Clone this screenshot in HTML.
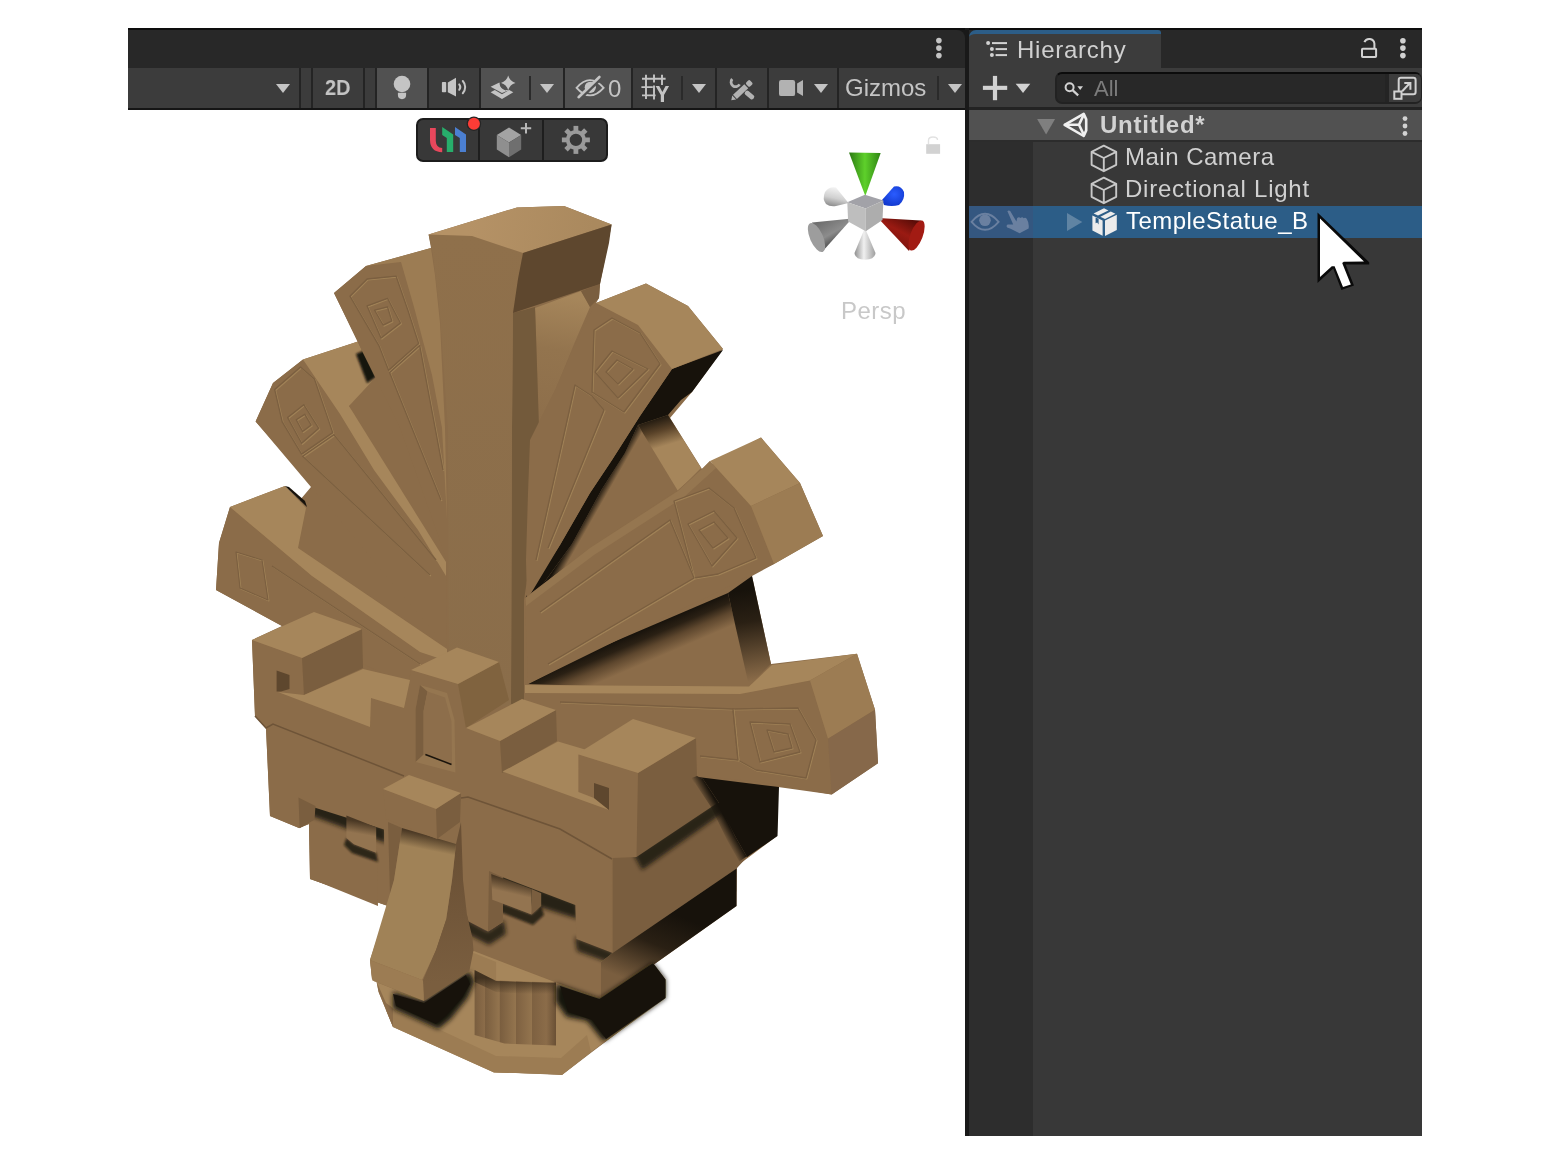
<!DOCTYPE html>
<html>
<head>
<meta charset="utf-8">
<title>Unity - Scene / Hierarchy</title>
<style>
html,body{margin:0;padding:0;}
body{width:1550px;height:1164px;background:#fff;position:relative;overflow:hidden;font-family:"Liberation Sans",sans-serif;color:#c4c4c4;}
.abs{position:absolute;}
.t{position:absolute;white-space:nowrap;line-height:1;font-size:24px;transform-origin:0 0;will-change:transform;}
/* scene view */
#sv-tabbar{left:128px;top:30px;width:837px;height:38px;background:#282828;box-sizing:border-box;border-top-right-radius:8px;}
#sv-toolbar{left:128px;top:68px;width:837px;height:40px;background:#3c3c3c;}
#sv-tbline{left:128px;top:108px;width:837px;height:2px;background:#151515;}
.sep{position:absolute;top:68px;width:2px;height:40px;background:#242424;}
.on{position:absolute;top:68px;height:40px;background:#515151;}
.idiv{position:absolute;top:76px;width:2px;height:24px;background:#2a2a2a;}
.dd{position:absolute;width:0;height:0;border-left:7px solid transparent;border-right:7px solid transparent;border-top:9px solid #c4c4c4;}
/* hierarchy */
#divider{left:965px;top:28px;width:4px;height:1108px;background:#191919;}
#h-tabbar{left:969px;top:28px;width:453px;height:40px;background:#282828;border-top:2px solid #0d0d0d;box-sizing:border-box;}
#h-tab{left:969px;top:30px;width:192px;height:38px;background:#3c3c3c;border-top:4px solid #2c5d87;box-sizing:border-box;border-top-left-radius:7px;border-top-right-radius:3px;}
#h-toolbar{left:969px;top:68px;width:453px;height:40px;background:#3c3c3c;}
#h-tbline{left:969px;top:107px;width:453px;height:3px;background:#232323;}
#h-body{left:969px;top:110px;width:453px;height:1026px;background:#383838;}
#h-leftcol{left:969px;top:141px;width:64px;height:995px;background:#2d2d2d;}
#h-scene{left:969px;top:110px;width:453px;height:29.5px;background:#515151;border-bottom:2px solid #2c2c2c;}
#h-sel{left:1033px;top:206px;width:389px;height:32px;background:#2c5d87;}
#h-sel-l{left:969px;top:206px;width:64px;height:32px;background:#345780;}
#search{left:1055px;top:72px;width:367px;height:32px;box-sizing:border-box;background:#282828;border:2px solid #222222;border-top-color:#0c0c0c;border-radius:7px;}
#searchbtn{left:1385px;top:74px;width:36px;height:28px;box-sizing:border-box;background:#3c3c3c;border-left:4px solid #242424;border-radius:0 5px 5px 0;}
</style>
</head>
<body>

<!-- ================= SCENE VIEW CHROME ================= -->
<div class="abs" style="left:128px;top:28px;width:1294px;height:2px;background:#0d0d0d;"></div>
<div class="abs" style="left:950px;top:30px;width:19px;height:38px;background:#191919;"></div>
<div class="abs" id="sv-tabbar"></div>
<div class="abs" id="sv-toolbar"></div>
<div class="abs" id="sv-tbline"></div>

<div class="on" style="left:377px;width:50px;"></div>
<div class="on" style="left:481px;width:82px;"></div>
<div class="on" style="left:565px;width:66px;"></div>

<div class="sep" style="left:299px"></div>
<div class="sep" style="left:311px"></div>
<div class="sep" style="left:363px"></div>
<div class="sep" style="left:375px"></div>
<div class="sep" style="left:427px"></div>
<div class="sep" style="left:479px"></div>
<div class="sep" style="left:563px"></div>
<div class="sep" style="left:631px"></div>
<div class="sep" style="left:715px"></div>
<div class="sep" style="left:767px"></div>
<div class="sep" style="left:837px"></div>

<div class="idiv" style="left:529px"></div>
<div class="idiv" style="left:681px"></div>
<div class="idiv" style="left:937px"></div>

<div class="dd" style="left:276px;top:84px"></div>
<div class="dd" style="left:540px;top:84px"></div>
<div class="dd" style="left:692px;top:84px"></div>
<div class="dd" style="left:814px;top:84px"></div>
<div class="dd" style="left:948px;top:84px"></div>

<div class="t" id="t2d" style="left:325px;top:77.3px;font-weight:bold;font-size:22.5px;transform:scaleX(0.885);">2D</div>
<div class="t" id="tzero" style="left:608px;top:77px;">0</div>
<div class="t" id="tgizmos" style="left:845px;top:76px;">Gizmos</div>

<!-- ICONS-SCENE-TOOLBAR -->
<svg class="abs" style="left:128px;top:28px" width="837" height="82" viewBox="128 28 837 82">
<g fill="#c4c4c4">
<!-- scene tab menu dots -->
<circle cx="938.9" cy="40.6" r="2.8"/><circle cx="938.9" cy="48.1" r="2.8"/><circle cx="938.9" cy="55.6" r="2.8"/>
<!-- bulb -->
<circle cx="402" cy="84" r="8.3"/>
<path d="M397.9,92.8 H406.1 V95.1 A4.1,4.1 0 0 1 397.9,95.1 Z"/>
<!-- audio -->
<rect x="441.9" y="82" width="4.3" height="10.3" rx="0.8"/>
<polygon points="447.8,82.4 456,77.8 456,96.4 447.8,92.3"/>
<!-- fx layers -->
<path d="M490.6,92.3 L502,98.9 L513.3,92.3 L509.2,90 L502,94.2 L494.8,90 Z"/>
<path d="M490.6,86.8 L499.4,82.6 Q500.4,91 509.3,90 L502,93 Z"/>
<path d="M508.2,75.6 Q509.8,81.4 515.5,83 Q509.8,84.6 508.2,90.3 Q506.6,84.6 500.9,83 Q506.6,81.4 508.2,75.6 Z"/>
<path d="M499.6,84.6 l2.2,-1 q1.2,4.6 5.6,5.6 l-1.6,1.2 q-4.6,-1.2 -6.2,-5.8z" fill="#515151"/>
</g>
<g fill="none" stroke="#c4c4c4" stroke-width="2" stroke-linecap="round">
<path d="M459.2,84.4 A4.2,4.2 0 0 1 459.2,89.8"/>
<path d="M462.8,81 A9,9 0 0 1 462.8,93.2"/>
</g>
<!-- eye slash -->
<g fill="none" stroke="#c4c4c4" stroke-width="1.9">
<path d="M576.6,87.8 Q590,72.5 603.6,87.8 Q590,103 576.6,87.8 Z"/>
</g>
<circle cx="590.3" cy="87.3" r="5.6" fill="#c4c4c4"/>
<path d="M579.6,99.2 L600.8,78.6" stroke="#515151" stroke-width="3" fill="none"/>
<path d="M578.6,97.2 L599.4,77" stroke="#c4c4c4" stroke-width="2.6" stroke-linecap="round" fill="none"/>
<!-- grid -->
<g stroke="#c4c4c4" stroke-width="1.9" fill="none">
<path d="M646,74.8 V99 M654,74.4 V82.4 M654,85.6 V99.4 M662,74.8 V85"/>
<path d="M642,78.8 H665.6 M641.4,87.1 H652.8 M642,95.4 H655.6"/>
</g>
<path d="M655.6,86 h3.6 l3.2,6 l3.2,-6 h3.5 l-5.1,9 v7 h-3.2 v-7 z" fill="#c4c4c4"/>
<!-- tools -->
<g fill="#b2b2b2">
<g transform="rotate(-43 742.8 89.4)">
<rect x="732" y="86.6" width="15.5" height="5.7"/>
<path d="M731,86.6 L727,89.45 L731,92.3 Z"/>
<rect x="748.8" y="86.6" width="5.5" height="5.7" rx="1.6"/>
</g>
<g transform="rotate(40 749 94.5)"><rect x="744.4" y="92.2" width="10.6" height="4.8" rx="2"/></g>
</g>
<path d="M732.2,79 A4.6,4.6 0 1 0 739.6,84.4" fill="none" stroke="#b2b2b2" stroke-width="2.8"/>
<!-- camera -->
<rect x="779" y="80.1" width="16.1" height="16" rx="2.2" fill="#b2b2b2"/>
<polygon points="797.1,83.6 803,80.1 803,96.1 797.1,92.6" fill="#b2b2b2"/>
</svg>

<!-- /ICONS-SCENE-TOOLBAR -->

<!-- ================= HIERARCHY ================= -->
<div class="abs" id="divider"></div>
<div class="abs" id="h-tabbar"></div>
<div class="abs" id="h-tab"></div>
<div class="abs" id="h-toolbar"></div>
<div class="abs" id="h-body"></div>
<div class="abs" id="h-leftcol"></div>
<div class="abs" id="h-scene"></div>
<div class="abs" id="h-tbline"></div>
<div class="abs" id="h-sel"></div>
<div class="abs" id="h-sel-l"></div>
<div class="abs" id="search"></div>
<div class="abs" id="searchbtn"></div>

<div class="t" id="thier" style="left:1016.5px;top:38px;letter-spacing:0.75px;color:#d0d0d0;">Hierarchy</div>
<div class="t" id="tall" style="left:1094px;top:77.8px;font-size:22px;color:#7c7c7c;">All</div>
<div class="t" id="tuntitled" style="left:1100px;top:113.3px;font-weight:bold;letter-spacing:0.75px;color:#d2d2d2;">Untitled*</div>
<div class="t" id="tmain" style="left:1124.8px;top:145px;letter-spacing:0.5px;color:#d0d0d0;">Main Camera</div>
<div class="t" id="tdir" style="left:1124.5px;top:177px;letter-spacing:0.75px;color:#d0d0d0;">Directional Light</div>
<div class="t" id="ttemple" style="left:1126.4px;top:209px;letter-spacing:0.45px;color:#ffffff;">TempleStatue_B</div>

<!-- ICONS-HIERARCHY -->
<svg class="abs" style="left:965px;top:28px" width="460" height="215" viewBox="965 28 460 215">
<g fill="#d2d2d2">
<!-- tab icon -->
<circle cx="988.1" cy="43.1" r="2"/><circle cx="991.9" cy="49.1" r="2"/><circle cx="991.9" cy="55.1" r="2"/>
<rect x="992" y="42.1" width="15" height="2"/><rect x="995.6" y="48.1" width="11.4" height="2"/><rect x="995.6" y="54.1" width="11.4" height="2"/>
<!-- plus -->
<rect x="982.9" y="85.8" width="24.3" height="4.1"/><rect x="992.9" y="75.9" width="4.2" height="24.3"/>
<!-- dropdown -->
<polygon points="1015.7,83.7 1030.3,83.7 1023,93"/>
<!-- search dropdown -->
<polygon points="1077.4,86.3 1083,86.3 1080.2,89.9"/>
<!-- menu dots -->
<circle cx="1402.9" cy="40.7" r="2.8"/><circle cx="1402.9" cy="48.1" r="2.8"/><circle cx="1402.9" cy="55.6" r="2.8"/>
<circle cx="1405" cy="118.6" r="2.4"/><circle cx="1405" cy="126" r="2.4"/><circle cx="1405" cy="133.5" r="2.4"/>
</g>
<!-- magnifier -->
<circle cx="1069.6" cy="87.3" r="4" fill="none" stroke="#d2d2d2" stroke-width="2"/>
<path d="M1072.8,90.4 L1078.2,95.4" stroke="#d2d2d2" stroke-width="2.2"/>
<!-- lock -->
<rect x="1362" y="48.7" width="14.1" height="8.3" rx="0.8" fill="none" stroke="#d2d2d2" stroke-width="2"/>
<path d="M1364.4,42.2 A5.2,5.2 0 0 1 1374.4,43.6 V48" fill="none" stroke="#d2d2d2" stroke-width="2"/>
<!-- popout icon -->
<g fill="none" stroke="#d2d2d2" stroke-width="2">
<rect x="1398.7" y="77.7" width="16.9" height="16.6" rx="2.2"/>
<rect x="1394.3" y="91.5" width="7.2" height="7.3" fill="#3c3c3c"/>
<path d="M1402.2,91.2 L1410.2,82.8 M1404.3,82.9 H1410.4 V89.8"/>
</g>
<!-- scene row: foldout + unity logo -->
<polygon points="1037.1,119 1055.1,119 1046.1,134.5" fill="#7f7f7f"/>
<g fill="none" stroke="#f0f0f0" stroke-width="2.6" stroke-linejoin="round">
<path d="M1064.6,124.8 L1083.7,113.8 L1086.2,119.4 L1086.2,130.4 L1083.7,136 Z"/>
<path d="M1064.6,124.8 H1079 M1079,124.8 L1083.9,114.4 M1079,124.8 L1084.1,135.4"/>
</g>
<!-- cube icons -->
<g fill="none" stroke="#c8c8c8" stroke-width="1.9" stroke-linejoin="round">
<path id="cubeo" d="M1103.8,145.6 L1116.2,151.8 V164.8 L1103.8,171.2 L1091.6,164.8 V151.8 Z M1091.6,151.8 L1103.8,158 L1116.2,151.8 M1103.8,158 V171.2"/>
<use href="#cubeo" transform="translate(0 32)"/>
</g>
<!-- eye + hand in selected row -->
<path d="M971.6,221.8 Q985,205.8 998.6,221.8 Q985,237.8 971.6,221.8 Z" fill="none" stroke="#6a80a0" stroke-width="1.9"/>
<circle cx="985" cy="220.3" r="5.8" fill="#6a80a0"/>
<path d="M1007.4,211.2 Q1008.6,209.8 1010.2,211 L1016.4,221.4 L1017.2,218 Q1019,216.6 1020.4,218 Q1022.4,216.4 1023.6,218.2 Q1025.6,217 1026.8,219 Q1029.4,223 1028.6,228.4 L1019.6,233.2 L1010.6,228.8 L1007.2,227.4 Q1005.8,225.6 1007.6,224.4 L1013.2,224.6 Z" fill="#6a80a0"/>
<!-- expand triangle -->
<polygon points="1067,213.1 1082.3,222.1 1067,231.1" fill="#6084a3"/>
<!-- prefab icon -->
<g fill="#ececec">
<polygon points="1092.4,215.6 1102.6,220.6 1102.6,235.8 1092.4,230.4"/>
<polygon points="1105,220.6 1116.8,214.8 1116.8,230 1105,236"/>
<polygon points="1093.6,213.4 1104,208.2 1108.4,210.4 1098,215.6"/>
<polygon points="1100.4,216.8 1110.8,211.6 1115.4,213.8 1105,219"/>
</g>
<polygon points="1095.6,217.4 1098.6,218.8 1098.6,224.6 1097.2,222.6 1095.6,223.2" fill="#2c5d87"/>
</svg>

<!-- /ICONS-HIERARCHY -->

<!-- ================= SCENE CONTENT ================= -->
<!-- STATUE -->
<svg class="abs" style="left:0;top:0" width="1550" height="1164" viewBox="0 0 1550 1164" shape-rendering="geometricPrecision">
<defs>
<filter id="b1" x="-30%" y="-30%" width="160%" height="160%"><feGaussianBlur stdDeviation="1.2"/></filter>
<filter id="b3" x="-30%" y="-30%" width="160%" height="160%"><feGaussianBlur stdDeviation="2"/></filter>
<filter id="b2" x="-30%" y="-30%" width="160%" height="160%"><feGaussianBlur stdDeviation="2.5"/></filter>
<linearGradient id="gTopBox" gradientUnits="userSpaceOnUse" x1="470" y1="215" x2="590" y2="240"><stop offset="0" stop-color="#b59266"/><stop offset="1" stop-color="#aa895e"/></linearGradient>
<linearGradient id="gDiag" gradientUnits="userSpaceOnUse" x1="725" y1="818" x2="716.3" y2="822.9"><stop offset="0" stop-color="#17120b" stop-opacity="1"/><stop offset="1" stop-color="#17120b" stop-opacity="0"/></linearGradient>
<linearGradient id="gC" gradientUnits="userSpaceOnUse" x1="470" y1="235" x2="480" y2="700"><stop offset="0" stop-color="#8f704b"/><stop offset="1" stop-color="#8a6d4a"/></linearGradient>
<linearGradient id="gC5" gradientUnits="userSpaceOnUse" x1="560" y1="295" x2="535" y2="450"><stop offset="0" stop-color="#a6865b"/><stop offset="0.35" stop-color="#93744e"/><stop offset="1" stop-color="#8b6c49"/></linearGradient>
<linearGradient id="gR25" gradientUnits="userSpaceOnUse" x1="650" y1="626" x2="662.6" y2="655.4"><stop offset="0" stop-color="#17120b"/><stop offset="0.3" stop-color="#2a2014"/><stop offset="0.6" stop-color="#5e472e"/><stop offset="1" stop-color="#8b6c49"/></linearGradient>
<linearGradient id="gR25r" gradientUnits="userSpaceOnUse" x1="745" y1="590" x2="760" y2="680"><stop offset="0" stop-color="#17120b"/><stop offset="0.35" stop-color="#2a2014"/><stop offset="1" stop-color="#8b6c49"/></linearGradient>
<linearGradient id="gR15f" gradientUnits="userSpaceOnUse" x1="600" y1="490" x2="607" y2="494"><stop offset="0" stop-color="#17120b"/><stop offset="1" stop-color="#8b6c49"/></linearGradient>
<linearGradient id="gR15t" gradientUnits="userSpaceOnUse" x1="655" y1="416" x2="664" y2="446"><stop offset="0" stop-color="#17120b"/><stop offset="0.5" stop-color="#5a4329"/><stop offset="1" stop-color="#a6865b"/></linearGradient>
<linearGradient id="gBandR" gradientUnits="userSpaceOnUse" x1="696" y1="788" x2="708" y2="780"><stop offset="0" stop-color="#7a5e3f"/><stop offset="1" stop-color="#3a2c1c"/></linearGradient>
<linearGradient id="gLowR" gradientUnits="userSpaceOnUse" x1="677" y1="830" x2="686" y2="844"><stop offset="0" stop-color="#3a2c1c"/><stop offset="1" stop-color="#7a5e3f"/></linearGradient>
<linearGradient id="gJawR" gradientUnits="userSpaceOnUse" x1="670" y1="912" x2="640" y2="985"><stop offset="0" stop-color="#17120b"/><stop offset="0.45" stop-color="#2a2014"/><stop offset="1" stop-color="#7a5e3f"/></linearGradient>
<linearGradient id="gRecL" gradientUnits="userSpaceOnUse" x1="340" y1="818" x2="336" y2="842"><stop offset="0" stop-color="#3a2c1c"/><stop offset="1" stop-color="#8b6c49"/></linearGradient>
<linearGradient id="gRecR" gradientUnits="userSpaceOnUse" x1="530" y1="888" x2="524" y2="912"><stop offset="0" stop-color="#3a2c1c"/><stop offset="1" stop-color="#8b6c49"/></linearGradient>
<linearGradient id="gEyeL" gradientUnits="userSpaceOnUse" x1="362" y1="822" x2="360" y2="834"><stop offset="0" stop-color="#4a3824"/><stop offset="1" stop-color="#937450"/></linearGradient>
<linearGradient id="gEyeR" gradientUnits="userSpaceOnUse" x1="512" y1="880" x2="509" y2="893"><stop offset="0" stop-color="#4a3824"/><stop offset="1" stop-color="#937450"/></linearGradient>
<linearGradient id="gNose" gradientUnits="userSpaceOnUse" x1="430" y1="835" x2="427" y2="850"><stop offset="0" stop-color="#4a3824"/><stop offset="1" stop-color="#a08257"/></linearGradient>
<linearGradient id="gNoseR" gradientUnits="userSpaceOnUse" x1="455" y1="850" x2="466" y2="980"><stop offset="0" stop-color="#6a5035"/><stop offset="1" stop-color="#7a5e3f"/></linearGradient>
<linearGradient id="gCol" gradientUnits="userSpaceOnUse" x1="475" y1="0" x2="556" y2="0">
<stop offset="0" stop-color="#7a5e3f"/><stop offset="0.12" stop-color="#8b6c49"/><stop offset="0.13" stop-color="#7a5e3f"/><stop offset="0.3" stop-color="#93744e"/><stop offset="0.31" stop-color="#7a5e3f"/><stop offset="0.5" stop-color="#93744e"/><stop offset="0.51" stop-color="#7e6141"/><stop offset="0.7" stop-color="#93744e"/><stop offset="0.71" stop-color="#7e6141"/><stop offset="0.88" stop-color="#8b6c49"/><stop offset="1" stop-color="#6a5035"/></linearGradient>
<linearGradient id="gColSh" gradientUnits="userSpaceOnUse" x1="0" y1="978" x2="0" y2="994"><stop offset="0" stop-color="#3a2c1c" stop-opacity="0.9"/><stop offset="1" stop-color="#3a2c1c" stop-opacity="0"/></linearGradient>
<linearGradient id="gBaseSh" gradientUnits="userSpaceOnUse" x1="560" y1="1000" x2="600" y2="1020"><stop offset="0" stop-color="#8b6c49" stop-opacity="0"/><stop offset="1" stop-color="#17120b"/></linearGradient>
</defs>
<polygon points="230,507 285,486 300,500 311,487 255.6,421.6 273,383 303,359.6 358,341.6 334,293 366,266 431,248 428.6,234.4 517,207.4 564,206 611.6,224.6 600,284 599,298 596,303 646,283.6 688,306 723,349 692,392 670,418 702,469 761,437.6 800,483 823,536 774,564 752,576 771,664 857,653.8 875,709.7 878,763.3 831.7,794.6 778,787 777,836 737,866 736.5,906 653.8,964.4 665,980 665,997 592,1052 562,1075 495,1072 393,1025 377,982 372,979 370,960 388,906 310,879 309,824 299,828 270,816 266,728 255,716 252,640 282,626 216,590 219,543" fill="#8b6c49" />
<polygon points="528,684 590,652 728,593 749,686 590,686" fill="url(#gR25)" />
<polygon points="728,593 752,576 771,664 749,686" fill="url(#gR25r)" />
<polygon points="638,425 678,491 590,548 525.5,598 543,584 572,544 602,489 625,453" fill="url(#gR15f)" />
<polygon points="638,425 668,415 701,468 678,491" fill="url(#gR15t)" />
<polygon points="535,308 581,291 590,307 574,344 556,388 530,440 528,560 525,600 539,428 536,335" fill="url(#gC5)" />
<polygon points="581,291 600,284 599,298 590,307" fill="#7a5e3f" />
<polygon points="311,487 298,548 447,649 447,645" fill="#8b6c49" />
<polygon points="230,507 219,543 216,590 282,626 440,700 449,700 447,660 420,652 312,576" fill="#8b6c49" />
<polygon points="230,507 285,486 306,508 298,548 447,649 447,661 420,652 312,576" fill="#a6865b" />
<polygon points="285,486 307,507 305,501 289,487" fill="#17120b" />
<polygon points="255.6,421.6 273,383 303,359.6 340,414 374,470 418,530 446,575 447,647 375,563 312,485" fill="#8b6c49" />
<polygon points="303,359.6 358,341.6 363,353 380,387 349,406 400,470 446,552 446,576 418,530 374,470 340,414" fill="#a6865b" />
<polygon points="356,354 365,350 376,377 367,383" fill="#17120b" filter="url(#b1)"/>
<polygon points="349,406 376,377 400,428 446,556 446,562" fill="#8b6c49" />
<polygon points="334,293 366,266 401,262 414,307 432,375 442,428 446,500 446,558 400,428 380,387 363,353" fill="#8b6c49" />
<polygon points="366,266 431,248 435,275 440,323 445,428 447,520 442,428 432,375 414,307 401,262" fill="#9c7c53" />
<polygon points="513,313 535,307 536,335 539,428 530,560 524,600 524,704 511,704 512,428" fill="#735a3b" />
<polygon points="428.6,234.4 472,236 523,253 518,279 513,313 512,428 511,706 449,706 448,428 440,315 433,255" fill="url(#gC)" />
<polygon points="428.6,234.4 517,207.4 564,206 611.6,224.6 523,253 472,236" fill="url(#gTopBox)" />
<polygon points="523,253 611.6,224.6 609,243 600,284 513,313 518,279" fill="#5e472e" />
<polygon points="672,369 723,350 692,392 681,400 668,415 638,425 625,453 602,489 572,544 543,584 525.5,597.5 560,545 590,493 612,460 640,416" fill="#17120b" />
<polygon points="596,303 638,325 672,369 640,416 612,460 590,493 560,545 527,600 526,560 528,493 530,440 556,388 576,342" fill="#8b6c49" />
<polygon points="596,303 646,283.6 688,306 723,349 672,369 638,325" fill="#a6865b" />
<polygon points="702,469 710,461 751,506 774,564 752,574 718,592 632,633 528,684 525,598 590,548 678,490" fill="#8b6c49" />
<polygon points="525.5,598 590,548 678,491 702,469 710,461 716,468 684,497 594,555 526,606" fill="#957650" />
<polygon points="710,461 761,437.6 800,483 751,506" fill="#a6865b" />
<polygon points="751,506 800,483 823,536 774,564" fill="#9c7c53" />
<polygon points="525,692 740,694 810,681 828,738.7 831.7,794.6 761,782 698.5,775.8 696,745 525,745" fill="#8b6c49" />
<polygon points="525,685 749,686.4 772,665 857,653.8 810,680.6 740,694 525,693" fill="#a6865b" />
<polygon points="810,680.6 857,653.8 875,709.7 828,738.7" fill="#9c7c53" />
<polygon points="828,738.7 875,709.7 878,763.3 831.7,794.6" fill="#86684a" />
<path d="M349.9,296.2 L367.1,279 L396.1,276.2 L407.9,310.2 L418.6,343.4 L388.6,370.3 L378.9,345.6 Z" fill="none" stroke="#a08257" stroke-width="1.3" transform="translate(0.9,0.9)" stroke-linejoin="round"/>
<path d="M349.9,296.2 L367.1,279 L396.1,276.2 L407.9,310.2 L418.6,343.4 L388.6,370.3 L378.9,345.6 Z" fill="none" stroke="#7b5f40" stroke-width="1.3" stroke-linejoin="round"/>
<path d="M367.1,305.9 L387.5,298.3 L400.4,323 L381,338.1 Z" fill="none" stroke="#a08257" stroke-width="1.3" transform="translate(0.9,0.9)" stroke-linejoin="round"/>
<path d="M367.1,305.9 L387.5,298.3 L400.4,323 L381,338.1 Z" fill="none" stroke="#7b5f40" stroke-width="1.3" stroke-linejoin="round"/>
<path d="M374.6,310.2 L387.5,306.9 L391.8,320.9 L383.2,325.2 Z" fill="none" stroke="#a08257" stroke-width="1.3" transform="translate(0.9,0.9)" stroke-linejoin="round"/>
<path d="M374.6,310.2 L387.5,306.9 L391.8,320.9 L383.2,325.2 Z" fill="none" stroke="#7b5f40" stroke-width="1.3" stroke-linejoin="round"/>
<path d="M441,500 L389.6,372.4 L419.7,345.6 L443,470" fill="none" stroke="#a08257" stroke-width="1.3" transform="translate(0.9,0.9)" stroke-linejoin="round"/>
<path d="M441,500 L389.6,372.4 L419.7,345.6 L443,470" fill="none" stroke="#7b5f40" stroke-width="1.3" stroke-linejoin="round"/>
<path d="M274.7,389.6 L300.5,367.1 L314.4,378.9 L332.7,432.6 L301.6,454.1 L282.2,421.9 Z" fill="none" stroke="#a08257" stroke-width="1.3" transform="translate(0.9,0.9)" stroke-linejoin="round"/>
<path d="M274.7,389.6 L300.5,367.1 L314.4,378.9 L332.7,432.6 L301.6,454.1 L282.2,421.9 Z" fill="none" stroke="#7b5f40" stroke-width="1.3" stroke-linejoin="round"/>
<path d="M287.6,417.6 L303.7,404.7 L318.7,428.3 L301.6,443.3 Z" fill="none" stroke="#a08257" stroke-width="1.3" transform="translate(0.9,0.9)" stroke-linejoin="round"/>
<path d="M287.6,417.6 L303.7,404.7 L318.7,428.3 L301.6,443.3 Z" fill="none" stroke="#7b5f40" stroke-width="1.3" stroke-linejoin="round"/>
<path d="M296.2,419.7 L304.8,414.3 L311.2,425.1 L302.6,431.5 Z" fill="none" stroke="#a08257" stroke-width="1.3" transform="translate(0.9,0.9)" stroke-linejoin="round"/>
<path d="M296.2,419.7 L304.8,414.3 L311.2,425.1 L302.6,431.5 Z" fill="none" stroke="#7b5f40" stroke-width="1.3" stroke-linejoin="round"/>
<path d="M430,575 L302.6,456.2 L333.8,434.7 L436,560" fill="none" stroke="#a08257" stroke-width="1.3" transform="translate(0.9,0.9)" stroke-linejoin="round"/>
<path d="M430,575 L302.6,456.2 L333.8,434.7 L436,560" fill="none" stroke="#7b5f40" stroke-width="1.3" stroke-linejoin="round"/>
<path d="M236,552 L262,560 L268,600 L240,588 Z" fill="none" stroke="#a08257" stroke-width="1.1" transform="translate(0.9,0.9)" stroke-linejoin="round"/>
<path d="M236,552 L262,560 L268,600 L240,588 Z" fill="none" stroke="#7b5f40" stroke-width="1.1" stroke-linejoin="round"/>
<path d="M272,566 L420,664" fill="none" stroke="#a08257" stroke-width="1.1" transform="translate(0.9,0.9)" stroke-linejoin="round"/>
<path d="M272,566 L420,664" fill="none" stroke="#7b5f40" stroke-width="1.1" stroke-linejoin="round"/>
<path d="M595,372 L612,351 L648,369 L618,398 Z" fill="none" stroke="#a08257" stroke-width="1.3" transform="translate(0.9,0.9)" stroke-linejoin="round"/>
<path d="M595,372 L612,351 L648,369 L618,398 Z" fill="none" stroke="#7b5f40" stroke-width="1.3" stroke-linejoin="round"/>
<path d="M606,372 L617,360 L633,369 L618,384 Z" fill="none" stroke="#a08257" stroke-width="1.3" transform="translate(0.9,0.9)" stroke-linejoin="round"/>
<path d="M606,372 L617,360 L633,369 L618,384 Z" fill="none" stroke="#7b5f40" stroke-width="1.3" stroke-linejoin="round"/>
<path d="M594,330 L612,318 L640,333 L660,364 L624,412 L592,392 Z" fill="none" stroke="#a08257" stroke-width="1.3" transform="translate(0.9,0.9)" stroke-linejoin="round"/>
<path d="M594,330 L612,318 L640,333 L660,364 L624,412 L592,392 Z" fill="none" stroke="#7b5f40" stroke-width="1.3" stroke-linejoin="round"/>
<path d="M536,560 L575,385 L592,396 L604,410 L548,548" fill="none" stroke="#a08257" stroke-width="1.3" transform="translate(0.9,0.9)" stroke-linejoin="round"/>
<path d="M536,560 L575,385 L592,396 L604,410 L548,548" fill="none" stroke="#7b5f40" stroke-width="1.3" stroke-linejoin="round"/>
<path d="M688,524 L714,511 L737,538 L712,566 Z" fill="none" stroke="#a08257" stroke-width="1.3" transform="translate(0.9,0.9)" stroke-linejoin="round"/>
<path d="M688,524 L714,511 L737,538 L712,566 Z" fill="none" stroke="#7b5f40" stroke-width="1.3" stroke-linejoin="round"/>
<path d="M699,530 L714,522 L728,538 L713,548 Z" fill="none" stroke="#a08257" stroke-width="1.3" transform="translate(0.9,0.9)" stroke-linejoin="round"/>
<path d="M699,530 L714,522 L728,538 L713,548 Z" fill="none" stroke="#7b5f40" stroke-width="1.3" stroke-linejoin="round"/>
<path d="M674,501 L709,488 L734,508 L756,558 L718,574 L694,578 Z" fill="none" stroke="#a08257" stroke-width="1.3" transform="translate(0.9,0.9)" stroke-linejoin="round"/>
<path d="M674,501 L709,488 L734,508 L756,558 L718,574 L694,578 Z" fill="none" stroke="#7b5f40" stroke-width="1.3" stroke-linejoin="round"/>
<path d="M540,612 L670,520 L694,578 L548,664" fill="none" stroke="#a08257" stroke-width="1.3" transform="translate(0.9,0.9)" stroke-linejoin="round"/>
<path d="M540,612 L670,520 L694,578 L548,664" fill="none" stroke="#7b5f40" stroke-width="1.3" stroke-linejoin="round"/>
<path d="M750,722 L790,724 L800,752 L760,762 Z" fill="none" stroke="#a08257" stroke-width="1.3" transform="translate(0.9,0.9)" stroke-linejoin="round"/>
<path d="M750,722 L790,724 L800,752 L760,762 Z" fill="none" stroke="#7b5f40" stroke-width="1.3" stroke-linejoin="round"/>
<path d="M767,730 L788,734 L792,748 L774,752 Z" fill="none" stroke="#a08257" stroke-width="1.3" transform="translate(0.9,0.9)" stroke-linejoin="round"/>
<path d="M767,730 L788,734 L792,748 L774,752 Z" fill="none" stroke="#7b5f40" stroke-width="1.3" stroke-linejoin="round"/>
<path d="M733,709 L798,708 L816,740 L806,778 L756,770 L738,760 Z" fill="none" stroke="#a08257" stroke-width="1.3" transform="translate(0.9,0.9)" stroke-linejoin="round"/>
<path d="M733,709 L798,708 L816,740 L806,778 L756,770 L738,760 Z" fill="none" stroke="#7b5f40" stroke-width="1.3" stroke-linejoin="round"/>
<path d="M560,702 L733,709 L738,760 L700,756" fill="none" stroke="#a08257" stroke-width="1.3" transform="translate(0.9,0.9)" stroke-linejoin="round"/>
<path d="M560,702 L733,709 L738,760 L700,756" fill="none" stroke="#7b5f40" stroke-width="1.3" stroke-linejoin="round"/>
<polygon points="690,776 779,787 777.5,836 747,857 738,860 726,836 710,803 694,779" fill="#17120b" />
<polygon points="252,640 302,658 304,695 370,727 371,698 404,708 411,670 458,684 466,728 500,741 502,773 538,774 577,754 638,773 638,857 612,859 611,953 600,962 600,1000 470,955 388,906 310,879 309,824 299,828 270,816 266,728 255,716" fill="#8b6c49" />
<polygon points="302,658 362,629 363,668 304,695" fill="#7a5e3f" />
<polygon points="458,684 499,662 509,700 466,728" fill="#80633f" />
<polygon points="500,741 556,710 557,741 502,773" fill="#7a5e3f" />
<polygon points="638,773 696,738 697,776 703,779 719,803 636.5,857" fill="#7a5e3f" />
<polygon points="612.6,858 636.5,857 717.7,802.8 735,836 747,857 736.6,868.5 612.6,953" fill="#7a5e3f" />
<clipPath id="cLowR"><polygon points="612.6,858 636.5,857 717.7,802.8 735,836 747,857 736.6,868.5 612.6,953"/></clipPath>
<g clip-path="url(#cLowR)">
<polygon points="634,855 718,800 724,812 642,870" fill="#17120b" filter="url(#b3)" opacity="0.8"/>
</g>
<clipPath id="cRF"><polygon points="638,773 696,738 697,776 779,787 777.5,836 747,857 736.6,868.5 612.6,953 612.6,858 636.5,857"/></clipPath>
<g clip-path="url(#cRF)">
<polygon points="697,776 703,779 719,803 735,836 747,857 752,853 739.2,861.4 727,840 711,807 695,783 689,779" fill="url(#gDiag)" />
</g>
<polygon points="612.6,953 736.6,868.5 736.5,906 653.8,964.4 601,998.4 601,962" fill="url(#gJawR)" />
<polygon points="252,640 314,612 362,629 302,658" fill="#a6865b" />
<polygon points="278,692 304,695 363,669 410,680 404,708 371,698 370,727" fill="#a6865b" />
<polygon points="411,670 457,647.6 499,662 458,684" fill="#a6865b" />
<polygon points="466,728 522,699 556,710 500,741" fill="#a6865b" />
<polygon points="502.5,771.6 558,741.6 585,749.4 578.4,754.5 578.4,792 594,798 609,810" fill="#a6865b" />
<polygon points="577,754 633,719 696,738 638,773" fill="#a6865b" />
<polygon points="276.6,670.5 289.5,675 289.5,689 281,691.5 276.6,691.5" fill="#5e472e" />
<polygon points="594,783 609,788 609,810 594,798" fill="#5e472e" />
<polygon points="420,685 447,693 454.5,720 455.4,772.5 415.5,762 415.5,709.5" fill="#957650" />
<polygon points="420,685 427.5,691.5 423.6,711 423.6,754.5 415.5,762 415.5,709.5" fill="#7a5e3f" />
<polygon points="427.5,691.5 445,697.5 451.5,721.5 452,764.4 423.6,754.5 423.6,711" fill="#8d6e4b" />
<line x1="425.4" y1="754.5" x2="451.5" y2="764.4" stroke="#1a140c" stroke-width="1.6"/>
<polyline points="255,716 266,728 273,724 404,776" fill="none" stroke="#6e5438" stroke-width="1.5"/>
<polyline points="461,798 468,797 560,829 612,859" fill="none" stroke="#6e5438" stroke-width="1.5"/>
<polygon points="309.6,808 376.2,830 378,906 310.2,878.4" fill="#8b6c49" />
<clipPath id="cRecL"><polygon points="309.6,806 384,829.5 384.7,906 310.2,878.4"/></clipPath>
<g clip-path="url(#cRecL)">
<polygon points="298,795 386,828 386,843 298,811" fill="#17120b" filter="url(#b3)" opacity="0.85"/>
<polygon points="346.4,837.9 353.9,844.3 376.2,852.8 378,862 352,853 344,845" fill="#17120b" filter="url(#b1)" opacity="0.8"/>
</g>
<polygon points="298.5,797.5 315.5,806 314.5,819.8 299.6,828.3" fill="#7a5e3f" />
<polygon points="346.4,815.5 376.2,827.3 376.2,852.8 353.9,844.3 346.4,837.9" fill="url(#gEyeL)" />
<polygon points="388,822 402,828 394,880 390,896" fill="#7a5e3f" />
<polygon points="456,844 461,822 463,880 467,915 472.5,938 473.5,950.6 469.4,971 424,1001 423,980.6 436,950 446,920 452,880" fill="url(#gNoseR)" />
<polygon points="402,828 456,844 452,880 446,920 436,950 422,980 370,960 382,920 388,900 394,880" fill="url(#gNose)" />
<polygon points="370,960 422,980 424,1000 372,979" fill="#9c7c53" />
<polygon points="383,789 436,809 437,839 386,819" fill="#8b6c49" />
<polygon points="436,809 461,793 460,822 437,839" fill="#7a5e3f" />
<polygon points="383,789 409,775 461,793 436,809" fill="#a6865b" />
<polygon points="461.4,917.7 488,931.6 502.9,922 502.9,877.3 575.3,905 576.4,939 612.6,953 600.8,962 600.8,998.6 468.8,949.7 466,935" fill="#8b6c49" />
<clipPath id="cRecR"><polygon points="461.4,917.7 488,931.6 502.9,922 502.9,877.3 575.3,905 576.4,939 612.6,953 600.8,962 600.8,998.6 468.8,949.7 466,935"/></clipPath>
<g clip-path="url(#cRecR)">
<polygon points="500,874 577,903 578,919 540,907 502,893" fill="#17120b" filter="url(#b3)" opacity="0.85"/>
<polygon points="459,915 488,931.6 504,920 506,934 489,945 460,930" fill="#17120b" filter="url(#b3)" opacity="0.8"/>
<polygon points="575,937 614,952 613,964 577,951" fill="#17120b" filter="url(#b3)" opacity="0.8"/>
<polygon points="492.3,899.7 531.6,914.5 541.2,906 544,915 533,925 493,909" fill="#17120b" filter="url(#b1)" opacity="0.8"/>
</g>
<polygon points="489,870.9 502.9,877.3 502.9,922 488,931.6" fill="#7a5e3f" />
<polygon points="491.2,874.1 531.6,889 531.6,914.5 492.3,899.7" fill="url(#gEyeR)" />
<polygon points="531.6,889 541.2,893.3 541.2,906 531.6,914.5" fill="#7a5e3f" />
<polygon points="376.5,981.6 378.6,992 393,1027 494,1072.4 562.3,1074.5 591,1052 665.5,998 665.5,979.5 653,963 599.5,999 472.5,950.6 424,1001 372.4,980.6" fill="#a6865b" />
<polygon points="393,1008 442.6,1031 496,1056 561,1058 587,1035 591,1052 562.3,1074.5 494,1072.4 393,1027 386,1010" fill="#9c7c53" />
<polygon points="376.5,981.6 386,1003 393,1008 393,1027 378.6,992" fill="#8b6c49" />
<polygon points="474.6,968 496,980 556,982 556,1045.6 504.5,1043.5 474.6,1035" fill="url(#gCol)" />
<polygon points="467.4,950.6 496.3,962 496.3,980.6 468.4,969" fill="#9c7c53" />
<polygon points="496.3,962 523,972.3 555,982.6 496.3,980.6" fill="#a6865b" />
<polygon points="474.6,970 496,981 556,983 556,996 496,992 474.6,982" fill="url(#gColSh)" />
<polygon points="393,992 424,1001 469.4,971.3 474.6,981.6 467.4,998 450.8,1018.8 438.4,1029 393,1008.4" fill="#17120b" filter="url(#b2)"/>
<polygon points="393,994 424,1003 466,975 470,984 462,998 446,1016 436,1024 396,1006" fill="#17120b" />
<polygon points="556,983.7 599.5,999 653,963 665.5,979.5 665.5,998 603.6,1041.5 587,1020.8 566.4,1016.7 556,1002" fill="#17120b" filter="url(#b2)"/>
<polygon points="560,986 599.5,999 653,963 665.5,979.5 665.5,998 606,1039 592,1020 568,1012" fill="#17120b" />
<polygon points="446,920 436,950 423,980.6 424,1001 469.4,971 473.5,950.6 472.5,938 467,915" fill="url(#gNoseR)" />
<polygon points="370.3,961 423,980.6 424,1001 372.4,980.6" fill="#9c7c53" /></svg>
<!-- /STATUE -->
<!-- GIZMO -->
<svg class="abs" style="left:790px;top:130px" width="170" height="140" viewBox="790 130 170 140">
<defs>
<linearGradient id="zG" x1="0" y1="0" x2="1" y2="0"><stop offset="0" stop-color="#2c7a12"/><stop offset="0.5" stop-color="#5ed02b"/><stop offset="1" stop-color="#2f8513"/></linearGradient>
<linearGradient id="zW1" gradientUnits="userSpaceOnUse" x1="836" y1="188" x2="832" y2="206"><stop offset="0" stop-color="#f2f2f2"/><stop offset="0.55" stop-color="#d0d0d0"/><stop offset="1" stop-color="#8f8f8f"/></linearGradient>
<linearGradient id="zW2" gradientUnits="userSpaceOnUse" x1="854" y1="0" x2="876" y2="0"><stop offset="0" stop-color="#8a8a8a"/><stop offset="0.45" stop-color="#f0f0f0"/><stop offset="1" stop-color="#9a9a9a"/></linearGradient>
<linearGradient id="zGr" gradientUnits="userSpaceOnUse" x1="826" y1="218" x2="842" y2="246"><stop offset="0" stop-color="#6e6e6e"/><stop offset="0.5" stop-color="#8c8c8c"/><stop offset="1" stop-color="#2e2e2e"/></linearGradient>
<linearGradient id="zR" gradientUnits="userSpaceOnUse" x1="905" y1="216" x2="890" y2="244"><stop offset="0" stop-color="#5a0d08"/><stop offset="0.5" stop-color="#9a1a12"/><stop offset="1" stop-color="#7a130c"/></linearGradient>
<radialGradient id="zB" cx="0.55" cy="0.4" r="0.7"><stop offset="0" stop-color="#2a5cff"/><stop offset="1" stop-color="#0f35c8"/></radialGradient>
</defs>
<!-- white cone upper-left -->
<path d="M848.5,203 L836,187.5 Q829,186 825,192 Q822,199 826,204 Q830,207 836,206 Z" fill="url(#zW1)"/>
<!-- blue cone -->
<path d="M882,200 L894,186.5 Q901,185 904,192 Q905,200 899,205 Q892,207 884,205 Z" fill="url(#zB)"/>
<!-- green -->
<path d="M849,152.6 L880.7,152.9 L865.3,196 Z" fill="url(#zG)"/>
<!-- grey cone lower-left -->
<path d="M852,218.5 L812,222.5 L822,252 Z" fill="url(#zGr)"/>
<ellipse cx="816.5" cy="237.5" rx="6.5" ry="15.5" transform="rotate(-24 816.5 237.5)" fill="#9d9d9d"/>
<!-- bottom cone -->
<path d="M864.9,228 L875.5,253 Q875,259.5 865,259.8 Q855,259.5 854.5,253 Z" fill="url(#zW2)"/>
<!-- red cone -->
<path d="M878,218 L921,220.5 L909,251 Z" fill="url(#zR)"/>
<ellipse cx="916.5" cy="235.5" rx="6.2" ry="16" transform="rotate(21 916.5 235.5)" fill="#a21b13"/>
<!-- cube -->
<polygon points="847.3,202.2 864.9,194.8 883.4,200.5 865.8,208.4" fill="#a2a2a8"/>
<polygon points="847.3,202.2 865.8,208.4 865.8,231.3 848.1,221.6" fill="#bebebe"/>
<polygon points="865.8,208.4 883.4,200.5 882.5,219.9 865.8,231.3" fill="#adadad"/>
<!-- lock -->
<rect x="926.2" y="144.2" width="13.9" height="9.6" fill="#d2d2d2"/>
<path d="M928.5,144 L928.5,140.5 Q928.5,137 933,137 Q937.5,137 937.5,140" fill="none" stroke="#e2e2e2" stroke-width="1.4"/>
</svg>

<!-- /GIZMO -->
<div class="t" id="tpersp" style="left:840.5px;top:299px;letter-spacing:0.5px;color:#c8c8c8;">Persp</div>
<!-- OVERLAY -->
<div class="abs" style="left:416px;top:118px;width:192px;height:44px;box-sizing:border-box;background:#383838;border:2px solid #1c1c1c;border-radius:7px;"></div>
<div class="abs" style="left:478px;top:120px;width:2px;height:40px;background:#1e1e1e;"></div>
<div class="abs" style="left:542px;top:120px;width:2px;height:40px;background:#1e1e1e;"></div>
<svg class="abs" style="left:416px;top:112px" width="192" height="52" viewBox="416 112 192 52">
<!-- logo -->
<path d="M430,128 L435.8,128 L435.8,141 Q436,147.5 442.2,148 L442.2,152.2 Q430.2,152 430,140 Z" fill="#e8475c"/>
<path d="M442.2,127 L453.2,134.5 L453.2,152 L446.8,152 L446.8,138 L442.2,135 Z" fill="#27ae6b"/>
<path d="M455,127 L466,134.5 L466,152 L459.8,152 L459.8,138 L455,135 Z" fill="#4b7fd1"/>
<!-- red dot -->
<circle cx="473.9" cy="123.7" r="7.3" fill="#262626"/>
<circle cx="473.9" cy="123.7" r="6" fill="#fc3c36"/>
<!-- cube -->
<polygon points="496.8,135 509,127.4 521.2,135 509,142.5" fill="#a3a3a3"/>
<polygon points="496.8,135 509,142.5 509,157.2 496.8,149.5" fill="#8f8f8f"/>
<polygon points="509,142.5 521.2,135 521.2,149.5 509,157.2" fill="#6f6f6f"/>
<path d="M526,123 V133.4 M520.8,128.2 H531.2" stroke="#b8b8b8" stroke-width="2" fill="none"/>
<!-- gear -->
<g transform="translate(575.9 139.9)" fill="#9a9a9a">
<g id="gt"><rect x="-2.4" y="-14" width="4.8" height="5.5"/><rect x="-2.4" y="8.5" width="4.8" height="5.5"/></g>
<use href="#gt" transform="rotate(45)"/><use href="#gt" transform="rotate(90)"/><use href="#gt" transform="rotate(135)"/>
<circle r="8.1" fill="none" stroke="#9a9a9a" stroke-width="3.8"/>
</g>
</svg>

<!-- /OVERLAY -->
<!-- CURSOR -->
<svg class="abs" style="left:1310px;top:208px" width="70" height="90" viewBox="1310 208 70 90">
<polygon points="1317.5,212.6 1317.5,283 1333.2,268.4 1341.4,290 1354,285.4 1345.6,264.6 1369.2,264.6 1369.2,262.2" fill="#0a0a0a"/>
<polygon points="1320,218.6 1320,277 1331.8,266.2 1334.6,266.2 1343,287 1350.8,284.4 1342.2,263 1343.8,261.8 1364,261.6" fill="#ffffff"/>
</svg>

<!-- /CURSOR -->

</body>
</html>
